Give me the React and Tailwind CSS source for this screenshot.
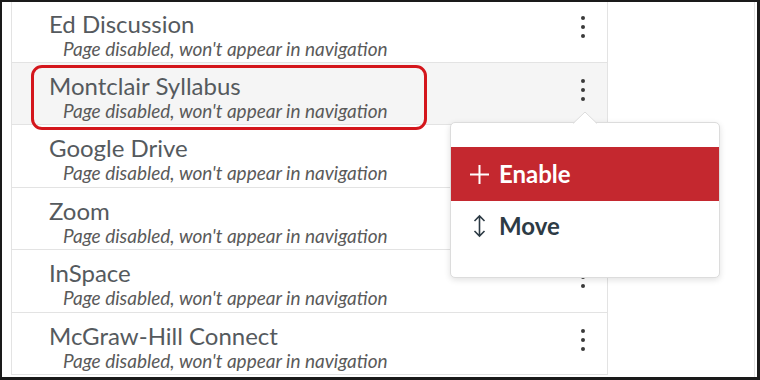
import React from "react";

const rows = [
  "Ed Discussion",
  "Montclair Syllabus",
  "Google Drive",
  "Zoom",
  "InSpace",
  "McGraw-Hill Connect",
];

function Kebab() {
  return (
    <div className="flex flex-col items-center gap-[5px]">
      <span className="block w-[4px] h-[4px] rounded-full bg-[#3a3a3a]" />
      <span className="block w-[4px] h-[4px] rounded-full bg-[#3a3a3a]" />
      <span className="block w-[4px] h-[4px] rounded-full bg-[#3a3a3a]" />
    </div>
  );
}

function Row({ title, selected, first }) {
  return (
    <div
      className={
        "flex items-start border-b border-[#e3e3e3] pl-[37px] pr-[22px] " +
        (first ? "h-[61px] pt-[8px] " : "h-[62.4px] pt-[9px] ") +
        (selected ? "bg-[#f5f5f5]" : "bg-white")
      }
    >
      <div className="flex-1">
        <div className="text-[24px] leading-[28px] text-[#555a5e]">{title}</div>
        <div className="pl-[14px] text-[19px] leading-[22px] italic text-[#5a5a5a]">
          Page disabled, won't appear in navigation
        </div>
      </div>
      <div className={first ? "pt-[6px]" : "pt-[7px]"}>
        <Kebab />
      </div>
    </div>
  );
}

export default function App() {
  return (
    <div
      className="w-[760px] h-[380px] bg-[#1a1a1a] pt-[2px] pl-[2px] pr-[3px] pb-[3px] overflow-hidden"
      style={{ fontFamily: "Lato, 'Open Sans', sans-serif" }}
    >
      <div className="relative h-full bg-white pl-[9px] flex">
        <div className="w-[597px] border-l border-r border-[#e3e3e3] h-[373px] border-b">
          {rows.map((r, i) => (
            <Row key={r} title={r} first={i === 0} selected={i === 1} />
          ))}
        </div>
        <div className="flex-1 border-r border-[#e3e3e3] mr-[2px]" />

        {/* highlight outline */}
        <div className="absolute left-[29px] top-[63px] w-[396px] h-[65px] rounded-[11px] border-[3.5px] border-[#d4161c] pointer-events-none" />

        {/* popover */}
        <div className="absolute left-[448px] top-[120px] w-[270px] h-[156px] bg-white rounded-[5px] border border-[#dcdcdc] shadow-[0_2px_6px_rgba(0,0,0,0.12)]">
          <svg
            className="absolute left-[122px] top-[-12px]"
            width="24"
            height="13"
            viewBox="0 0 24 13"
          >
            <path d="M0 13 L12 1 L24 13 Z" fill="white" />
            <path d="M0 12.5 L12 1 L24 12.5" fill="none" stroke="#dcdcdc" strokeWidth="1" />
          </svg>
          <div className="mt-[24px] h-[54px] bg-[#c4282f] flex items-center pl-[18px] text-white">
            <svg width="21" height="21" viewBox="0 0 21 21" className="mr-[9px]">
              <path d="M10.5 1 V20 M1 10.5 H20" stroke="white" strokeWidth="2" />
            </svg>
            <span className="text-[24px] font-bold leading-none">Enable</span>
          </div>
          <div className="h-[50px] flex items-center pl-[21px] text-[#2d3b45]">
            <svg width="15" height="24" viewBox="0 0 15 24" className="mr-[12px]">
              <path
                d="M7.5 2 V22 M2.5 7 L7.5 2 L12.5 7 M2.5 17 L7.5 22 L12.5 17"
                stroke="#2d3b45"
                strokeWidth="1.6"
                fill="none"
              />
            </svg>
            <span className="text-[24px] font-bold leading-none">Move</span>
          </div>
        </div>
      </div>
    </div>
  );
}
